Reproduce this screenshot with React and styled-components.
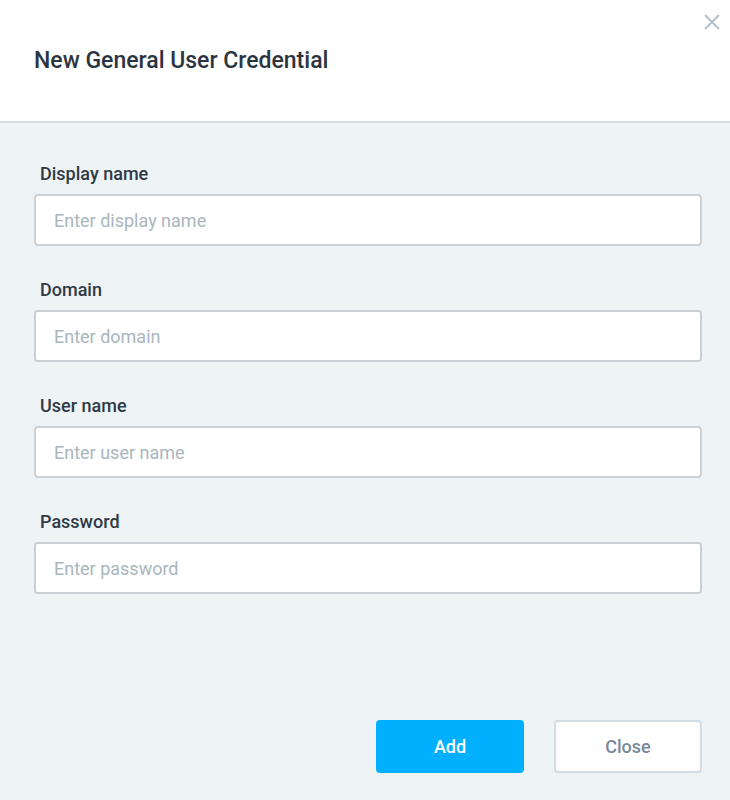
import React from "react";
import styled, { createGlobalStyle } from "styled-components";

const GlobalStyle = createGlobalStyle`
  html, body {
    margin: 0;
    padding: 0;
    background: #eef3f6;
  }
  * {
    box-sizing: border-box;
  }
`;

const Dialog = styled.div`
  width: 730px;
  height: 800px;
  display: flex;
  flex-direction: column;
  font-family: Roboto, "Liberation Sans", sans-serif;
  background-color: #eef3f6;
`;

const Header = styled.div`
  position: relative;
  height: 123px;
  flex-shrink: 0;
  display: flex;
  align-items: center;
  padding: 0 34px 0;
  background-color: #ffffff;
  border-bottom: 2px solid #d6dde2;
`;

const Title = styled.h1`
  margin: 0;
  font-size: 23px;
  font-weight: 500;
  color: #2b3540;
`;

const CloseIcon = styled.button`
  position: absolute;
  top: 12px;
  right: 8px;
  width: 20px;
  height: 20px;
  padding: 0;
  border: none;
  background: none;
  cursor: pointer;
  svg {
    display: block;
  }
`;

const Form = styled.div`
  flex: 1;
  display: flex;
  flex-direction: column;
  gap: 32px;
  padding: 39px 28px 0 34px;
`;

const Field = styled.div`
  display: flex;
  flex-direction: column;
  gap: 8px;
`;

const Label = styled.label`
  padding-left: 6px;
  font-size: 18px;
  line-height: 24px;
  font-weight: 500;
  color: #2f3a45;
`;

const Input = styled.input`
  height: 52px;
  padding: 0 18px;
  border: 2px solid #c9d1d7;
  border-radius: 4px;
  background-color: #ffffff;
  font-family: inherit;
  font-size: 18px;
  color: #2f3a45;
  outline: none;
  &::placeholder {
    color: #aab6be;
  }
`;

const Footer = styled.div`
  display: flex;
  justify-content: flex-end;
  gap: 30px;
  padding: 0 28px 27px 0;
`;

const Button = styled.button`
  width: 148px;
  height: 53px;
  border-radius: 4px;
  font-family: inherit;
  font-size: 18px;
  font-weight: 500;
  cursor: pointer;
  border: 2px solid ${(p) => (p.$primary ? "#00b0ff" : "#d3dbe3")};
  background-color: ${(p) => (p.$primary ? "#00b0ff" : "#ffffff")};
  color: ${(p) => (p.$primary ? "#ffffff" : "#778899")};
`;

const fields = [
  { label: "Display name", placeholder: "Enter display name" },
  { label: "Domain", placeholder: "Enter domain" },
  { label: "User name", placeholder: "Enter user name" },
  { label: "Password", placeholder: "Enter password", type: "password" },
];

const App = () => (
  <>
    <GlobalStyle />
    <Dialog>
      <Header>
        <Title>New General User Credential</Title>
        <CloseIcon aria-label="close">
          <svg width="20" height="20" viewBox="0 0 20 20">
            <path
              d="M3 3 L17 17 M17 3 L3 17"
              stroke="#b3c1cd"
              strokeWidth="2"
              fill="none"
            />
          </svg>
        </CloseIcon>
      </Header>
      <Form>
        {fields.map((f) => (
          <Field key={f.label}>
            <Label>{f.label}</Label>
            <Input type={f.type || "text"} placeholder={f.placeholder} />
          </Field>
        ))}
      </Form>
      <Footer>
        <Button $primary>Add</Button>
        <Button>Close</Button>
      </Footer>
    </Dialog>
  </>
);

export default App;
